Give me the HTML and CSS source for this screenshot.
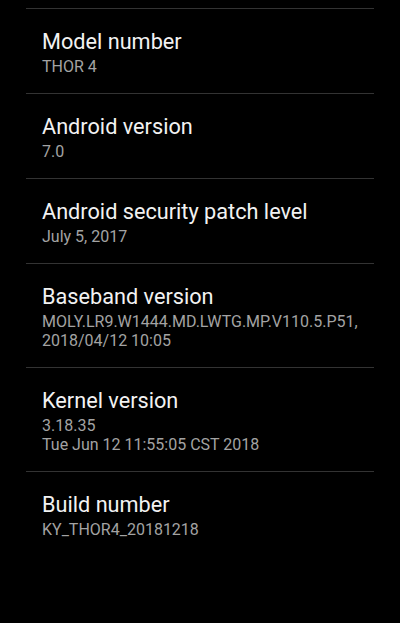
FILE: index.html
```html
<!DOCTYPE html>
<html lang="en">
<head>
    <meta charset="UTF-8">
    <meta name="viewport" content="width=device-width, initial-scale=1.0">
    <title>About phone</title>
    <link rel="stylesheet" href="styles.css">
</head>
<body>

<!-- Device info list -->
<div class="info-list">
    <div class="info-item">
        <div class="info-title">Model number</div>
        <div class="info-summary">THOR 4</div>
    </div>
    <div class="info-item">
        <div class="info-title">Android version</div>
        <div class="info-summary">7.0</div>
    </div>
    <div class="info-item">
        <div class="info-title">Android security patch level</div>
        <div class="info-summary">July 5, 2017</div>
    </div>
    <div class="info-item">
        <div class="info-title">Baseband version</div>
        <div class="info-summary">MOLY.LR9.W1444.MD.LWTG.MP.V110.5.P51,<br>2018/04/12 10:05</div>
    </div>
    <div class="info-item">
        <div class="info-title">Kernel version</div>
        <div class="info-summary">3.18.35<br>Tue Jun 12 11:55:05 CST 2018</div>
    </div>
    <div class="info-item">
        <div class="info-title">Build number</div>
        <div class="info-summary">KY_THOR4_20181218</div>
    </div>
</div>

</body>
</html>
```

FILE: styles.css
```css
body {
    font-family: Roboto, 'Noto Sans', sans-serif;
    margin: 0;
    padding: 0;
    background-color: #000;
    height: 623px;
    overflow: hidden;
}

.info-list {
    margin: 0 26px;
    padding-top: 8px;
}

.info-item {
    border-top: 1px solid #333;
    padding: 17px 16px;
}

.info-title {
    color: #f2f2f2;
    font-size: 21.7px;
    line-height: 31px;
}

.info-summary {
    color: #a3a3a3;
    font-size: 16px;
    line-height: 19px;
}
```
